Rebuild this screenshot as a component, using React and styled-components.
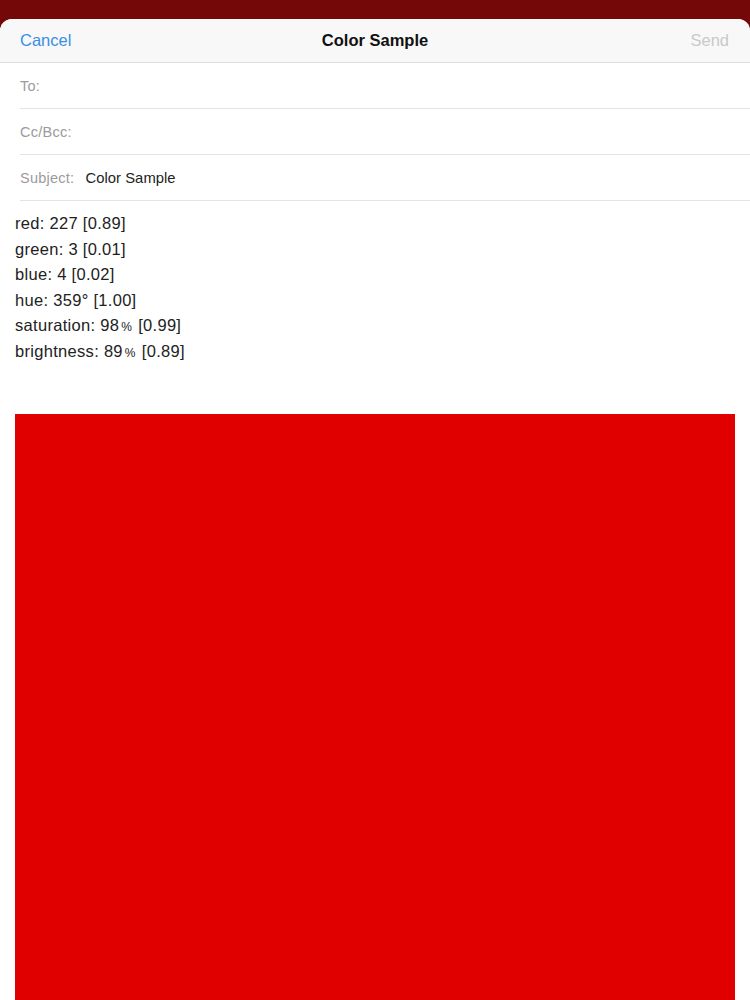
import React from "react";
import styled, { createGlobalStyle } from "styled-components";

const Global = createGlobalStyle`
  html, body { margin: 0; padding: 0; background: #740808; }
  body { font-family: "Liberation Sans", Arial, sans-serif; -webkit-font-smoothing: antialiased; }
  #root { min-height: 1000px; }
`;

const Page = styled.div`
  height: 1000px;
  overflow: hidden;
  padding-top: 19px;
  box-sizing: border-box;
  background: #740808;
`;

const Sheet = styled.div`
  background: #ffffff;
  border-radius: 12px 12px 0 0;
  overflow: hidden;
  height: 981px;
`;

const NavBar = styled.div`
  height: 43px;
  background: #f8f8f8;
  border-bottom: 1px solid #dedede;
  display: grid;
  grid-template-columns: 1fr auto 1fr;
  align-items: center;
  padding: 0 20px;
`;

const NavButton = styled.span`
  font-size: 16.5px;
  color: ${(p) => (p.$disabled ? "#c9c9c9" : "#3a8ee6")};
  justify-self: ${(p) => (p.$right ? "end" : "start")};
  margin-right: ${(p) => (p.$right ? "1px" : "0")};
`;

const Title = styled.span`
  font-size: 16.5px;
  font-weight: bold;
  color: #111;
`;

const HeaderRow = styled.div`
  height: 45px;
  margin-left: 20px;
  border-bottom: 1px solid #e3e3e3;
  display: flex;
  align-items: center;
  gap: 11px;
  font-size: 14.5px;
  letter-spacing: 0.25px;
`;

const Label = styled.span`
  color: #9b9b9b;
`;

const Value = styled.span`
  color: #222;
  font-size: 14.8px;
  letter-spacing: 0.05px;
`;

const Body = styled.div`
  padding: 10px 15px 0;
  font-size: 16.5px;
  letter-spacing: 0.3px;
  line-height: 25.6px;
  color: #222;
`;

const Line = styled.div``;

const Pct = styled.span`
  font-size: 12px;
  line-height: 0;
  margin: 0 6px 0 2px;
`;

const Swatch = styled.div`
  margin: 49px 15px 0;
  height: 620px;
  background: #e10000;
`;

export default function App() {
  return (
    <>
      <Global />
      <Page>
        <Sheet>
          <NavBar>
            <NavButton>Cancel</NavButton>
            <Title>Color Sample</Title>
            <NavButton $right $disabled>Send</NavButton>
          </NavBar>
          <HeaderRow><Label>To:</Label></HeaderRow>
          <HeaderRow><Label>Cc/Bcc:</Label></HeaderRow>
          <HeaderRow><Label>Subject:</Label><Value>Color Sample</Value></HeaderRow>
          <Body>
            <Line>red: 227 [0.89]</Line>
            <Line>green: 3 [0.01]</Line>
            <Line>blue: 4 [0.02]</Line>
            <Line>hue: 359° [1.00]</Line>
            <Line>saturation: 98<Pct>%</Pct>[0.99]</Line>
            <Line>brightness: 89<Pct>%</Pct>[0.89]</Line>
          </Body>
          <Swatch />
        </Sheet>
      </Page>
    </>
  );
}
